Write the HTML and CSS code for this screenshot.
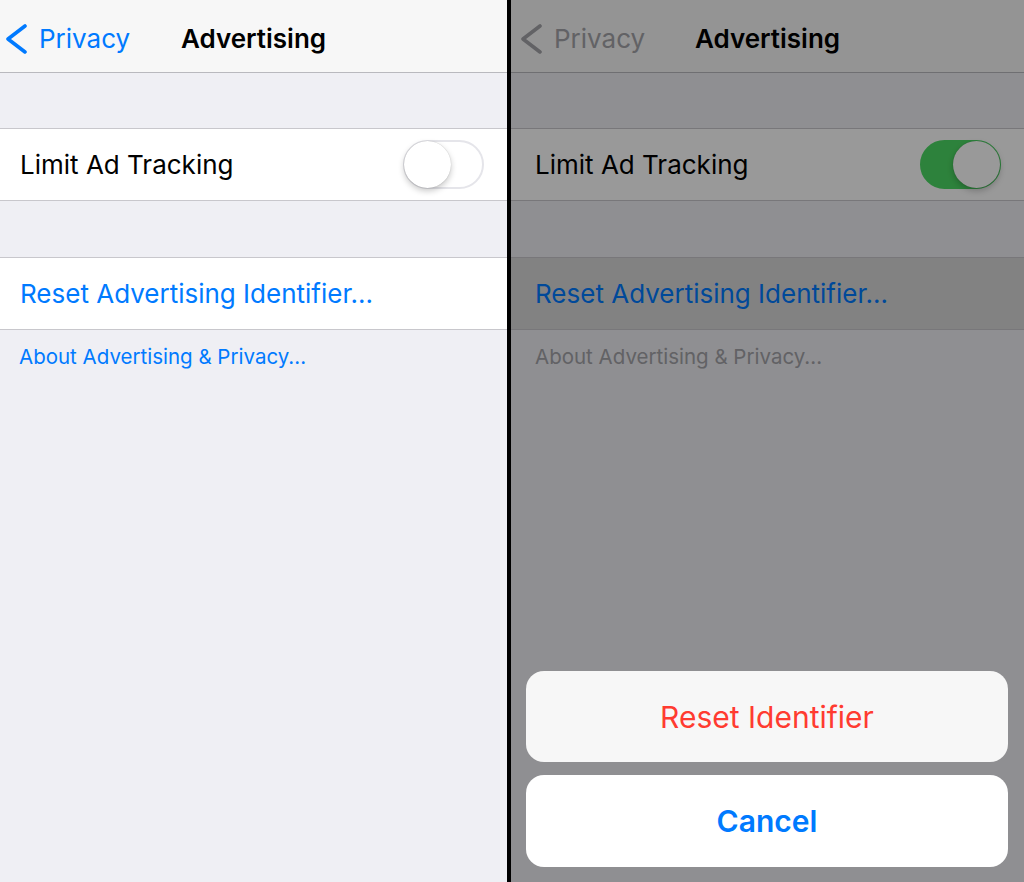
FILE: index.html
```html
<!DOCTYPE html>
<html lang="en">
<head>
  <meta charset="UTF-8">
  <meta name="viewport" content="width=device-width, initial-scale=1.0">
  <title>Advertising</title>
  <link rel="stylesheet" href="styles.css">
</head>

<body>
  <div class="screens">

    <!-- Left: plain settings page -->
    <section class="screen">
      <header class="nav-bar">
        <a class="back" href="#">
          <svg class="chevron" width="22" height="30" viewBox="0 0 22 30">
            <path d="M19 2 L2 15 L19 28" />
          </svg>
          Privacy
        </a>
        <h1 class="nav-title">Advertising</h1>
      </header>

      <div class="group">
        <div class="cell">
          <span>Limit Ad Tracking</span>
          <span class="switch"></span>
        </div>
      </div>

      <div class="group">
        <div class="cell cell-link">Reset Advertising Identifier...</div>
      </div>

      <p class="footnote">About Advertising &amp; Privacy...</p>
    </section>

    <!-- Right: same page with the action sheet open -->
    <section class="screen screen-dimmed">
      <header class="nav-bar">
        <a class="back" href="#">
          <svg class="chevron" width="22" height="30" viewBox="0 0 22 30">
            <path d="M19 2 L2 15 L19 28" />
          </svg>
          Privacy
        </a>
        <h1 class="nav-title">Advertising</h1>
      </header>

      <div class="group">
        <div class="cell">
          <span>Limit Ad Tracking</span>
          <span class="switch on"></span>
        </div>
      </div>

      <div class="group">
        <div class="cell cell-link selected">Reset Advertising Identifier...</div>
      </div>

      <p class="footnote">About Advertising &amp; Privacy...</p>

      <div class="dim"></div>

      <div class="action-sheet">
        <button class="sheet-btn destructive">Reset Identifier</button>
        <button class="sheet-btn cancel">Cancel</button>
      </div>
    </section>

  </div>
</body>
</html>
```

FILE: styles.css
```css
/* Global Styles */
body {
  margin: 0;
  background: #000;
  font-family: 'Inter', 'Liberation Sans', sans-serif;
  overflow: hidden;
}

.screens {
  display: flex;
  gap: 4px;
  height: 882px;
}

.screen {
  position: relative;
  width: 507px;
  height: 882px;
  background: #efeff4;
  overflow: hidden;
}

.screen-dimmed {
  flex: 1;
}

/* Navigation bar */
.nav-bar {
  display: grid;
  grid-template-columns: 1fr auto 1fr;
  align-items: center;
  height: 73px;
  box-sizing: border-box;
  padding-top: 5px;
  background: #f7f7f7;
  border-bottom: 1px solid #b9b9be;
}

.back {
  display: flex;
  align-items: center;
  padding-left: 6px;
  color: #007aff;
  text-decoration: none;
  font-size: 26px;
}

.chevron {
  margin-right: 11px;
}

.chevron path {
  fill: none;
  stroke: #007aff;
  stroke-width: 3.6;
  stroke-linecap: round;
  stroke-linejoin: round;
}

.nav-title {
  margin: 0;
  font-size: 26px;
  font-weight: 600;
  color: #000;
}

/* Table groups */
.group {
  margin-top: 55px;
  background: #fff;
  border-top: 1px solid #c8c7cc;
  border-bottom: 1px solid #c8c7cc;
}

.group + .group {
  margin-top: 56px;
}

.cell {
  display: flex;
  align-items: center;
  justify-content: space-between;
  height: 71px;
  padding: 0 23px 0 20px;
  font-size: 26px;
  color: #000;
}

.cell-link {
  color: #007aff;
}

.footnote {
  margin: 15px 0 0;
  padding-left: 19px;
  font-size: 20.5px;
  line-height: 1.2;
  color: #007aff;
}

/* Switch */
.switch {
  position: relative;
  width: 81px;
  height: 49px;
  box-sizing: border-box;
  border: 2px solid #e5e5ea;
  border-radius: 25px;
  background: #fff;
}

.switch::after {
  content: "";
  position: absolute;
  top: -1px;
  left: -1px;
  width: 47px;
  height: 47px;
  border-radius: 50%;
  background: #fff;
  box-shadow: 0 3px 6px rgba(0, 0, 0, 0.22), 0 0 1px rgba(0, 0, 0, 0.25);
}

.switch.on {
  background: #4cd964;
  border-color: #4cd964;
}

.switch.on::after {
  left: auto;
  right: -1px;
}

/* Dimmed screen behind the sheet */
.screen-dimmed .back,
.screen-dimmed .footnote {
  color: #a3a3a8;
}

.screen-dimmed .chevron path {
  stroke: #a3a3a8;
}

.screen-dimmed .back {
  padding-left: 10px;
}

.screen-dimmed .cell {
  padding-left: 24px;
}

.screen-dimmed .footnote {
  padding-left: 24px;
}

.cell.selected {
  background: #d9d9d9;
}

.dim {
  position: absolute;
  inset: 0;
  background: rgba(0, 0, 0, 0.4);
}

/* Action sheet */
.action-sheet {
  position: absolute;
  left: 15px;
  right: 16px;
  bottom: 15px;
  display: flex;
  flex-direction: column;
  gap: 13px;
}

.sheet-btn {
  height: 92px;
  border: none;
  border-radius: 18px;
  background: #fff;
  font-family: 'Inter', 'Liberation Sans', sans-serif;
  font-size: 30px;
  cursor: pointer;
}

.sheet-btn.destructive {
  height: 91px;
  background: #f7f7f7;
  color: #ff3b30;
}

.sheet-btn.cancel {
  color: #007aff;
  font-weight: 600;
}
```
